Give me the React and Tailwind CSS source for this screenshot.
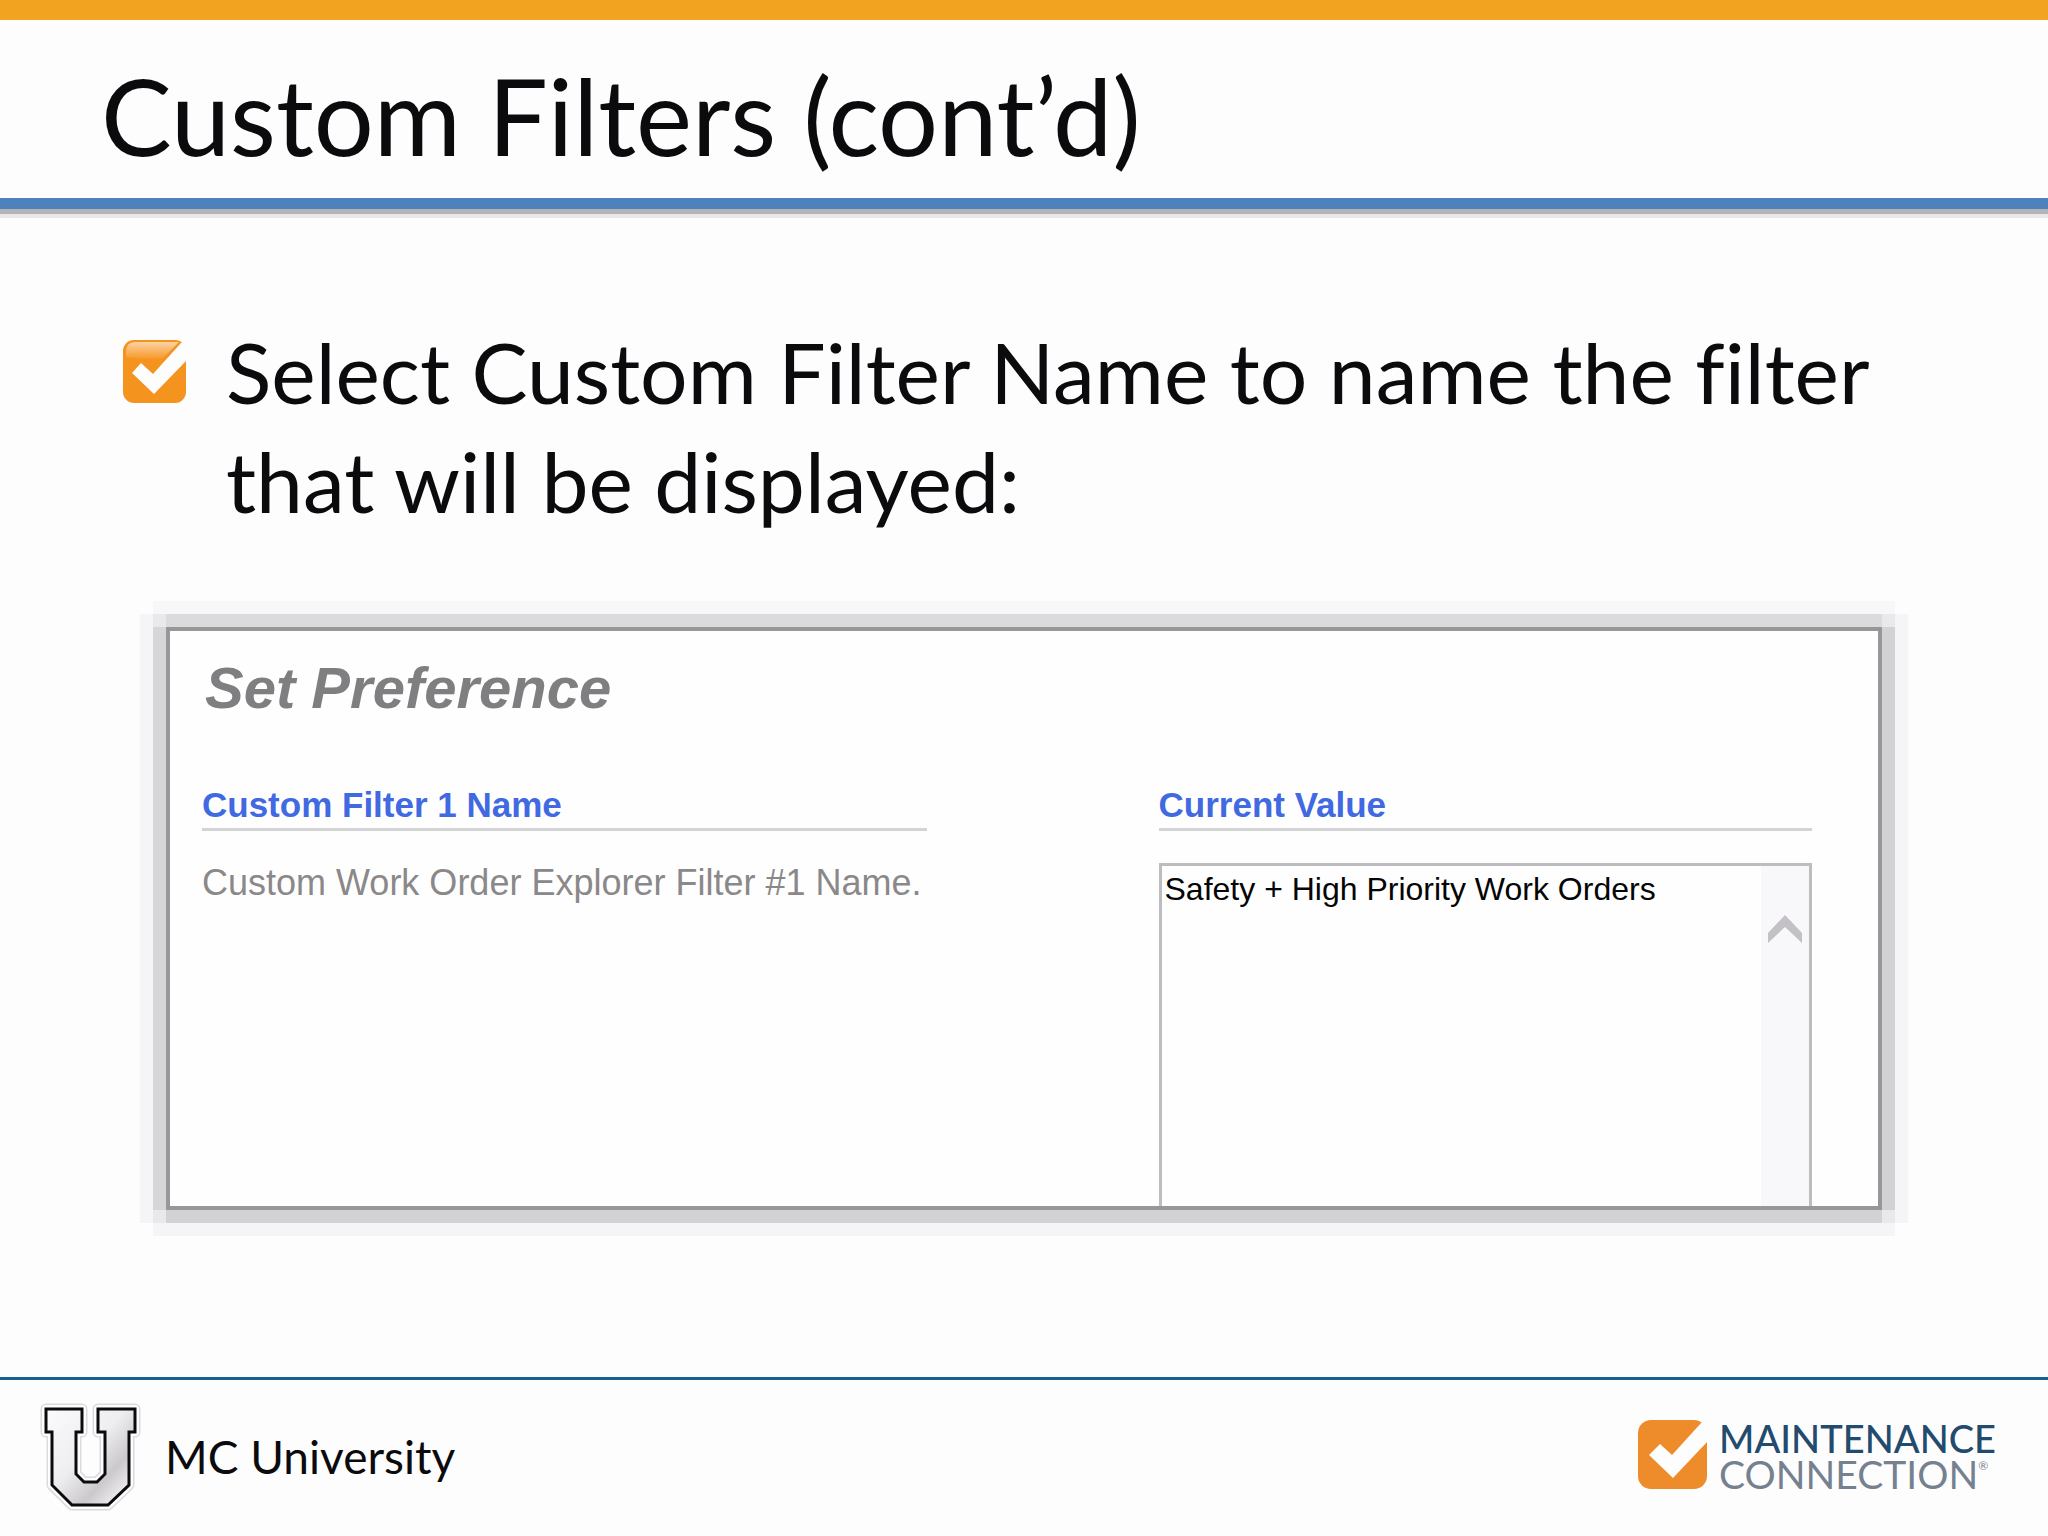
function BulletCheck() {
  return (
    <svg viewBox="0 0 63 63" className="h-[63px] w-[63px]" aria-hidden="true">
      <defs>
        <linearGradient id="gloss" x1="0" y1="0" x2="0" y2="1">
          <stop offset="0" stopColor="#fcd3a2" />
          <stop offset="1" stopColor="#f7992a" />
        </linearGradient>
      </defs>
      <rect width="63" height="63" rx="11" fill="#f5931f" />
      <path d="M12 2H56L40 18Q22 20 3 17V12Q3 2 12 2Z" fill="url(#gloss)" />
      <path d="M9 33L18 23L30 34L58 3L64 -1V20L31 54Z" fill="#fefdfe" />
    </svg>
  );
}

function BrandCheck() {
  return (
    <svg viewBox="0 0 69 69" className="h-[69px] w-[69px]" aria-hidden="true">
      <rect width="69" height="69" rx="13" fill="#ee8c2b" />
      <path d="M11 35L22 24L34 35L64 2L70 -1V21L35 58Z" fill="#fefdfe" />
    </svg>
  );
}

function UniversityMark() {
  const shape =
    "M6 6H42V29H36V71L44 79H57L65 71V29H58V6H95V29H89V82L68 102H32L12 82V29H6Z";
  return (
    <svg viewBox="0 0 101 108" className="h-[108px] w-[101px]" aria-hidden="true">
      <defs>
        <linearGradient id="silver" x1="0" y1="0" x2="1" y2="1">
          <stop offset="0" stopColor="#fbfafc" />
          <stop offset="0.45" stopColor="#eeedef" />
          <stop offset="0.7" stopColor="#cbc9cc" />
          <stop offset="0.9" stopColor="#f4f3f5" />
        </linearGradient>
      </defs>
      <path d={shape} fill="none" stroke="#dddadf" strokeWidth="11" strokeLinejoin="round" />
      <path d={shape} fill="none" stroke="#fefdfe" strokeWidth="8" strokeLinejoin="round" />
      <path d={shape} fill="url(#silver)" stroke="#0b0a0c" strokeWidth="3" />
    </svg>
  );
}

function ColumnHeading({ children, ...rest }) {
  return (
    <div className="border-b-[3px] border-[#d4d3d6] pb-[3px] text-[35px] leading-10 font-bold text-[#4169e1]">
      <span {...rest}>{children}</span>
    </div>
  );
}

export default function App() {
  return (
    <div className="flex min-h-screen flex-col bg-[#fefdfe] font-['Lato',sans-serif] text-[#0b0a0d] [font-variant-ligatures:none]">
      <header className="border-t-[20px] border-[#f2a31f]">
        <h1 className="h-[178px] pl-[101px] pt-[35px] text-[106px] leading-[120px]">
          Custom Filters (cont’d)
        </h1>
        <div className="h-[11px] bg-[#4e81bd]" />
        <div className="h-[5px] bg-[#b3b4b6]" />
        <div className="h-1 bg-[#ebe8ed]" />
      </header>

      <main className="flex-1">
        <ul className="pl-[123px] pt-[99px]">
          <li className="flex gap-10">
            <div className="shrink-0 pt-[23px]">
              <BulletCheck />
            </div>
            <p className="text-[84px] leading-[109px]">
              Select Custom Filter Name to name the filter
              <br />
              that will be displayed:
            </p>
          </li>
        </ul>

        <section className="mx-[170px] mt-24 h-[575px] overflow-hidden bg-[#fefefe] pr-[66px] pl-8 font-['Liberation_Sans',Arial,sans-serif] shadow-[0_0_0_4px_#979698,13px_0_0_4px_#d2d1d4,-13px_0_0_4px_#d6d5d8,0_13px_0_4px_#d2d1d4,0_-13px_0_4px_#dbdadd,0_0_0_17px_#e9e8eb,13px_0_0_17px_#f5f4f7,-13px_0_0_17px_#f5f4f7,0_13px_0_17px_#f5f4f7,0_-13px_0_17px_#f7f6f9]">
          <h2 className="pt-[23px] pl-[3px] text-[58px] leading-[68px] font-bold text-[#7f7e80] italic">
            Set Preference
          </h2>
          <div className="mt-[63px] grid grid-cols-[724fr_653fr] gap-[232px]">
            <div>
              <ColumnHeading>Custom Filter 1 Name</ColumnHeading>
              <p className="mt-8 text-[36px] leading-10 whitespace-nowrap text-[#8b8889]">
                Custom Work Order Explorer Filter #1 Name.
              </p>
            </div>
            <div>
              <ColumnHeading id="current-value">Current Value</ColumnHeading>
              <div className="mt-8 flex h-[360px] border-[3px] border-[#bdbcbe]">
                <textarea
                  aria-labelledby="current-value"
                  defaultValue="Safety + High Priority Work Orders"
                  className="min-w-0 flex-1 resize-none overflow-hidden px-[3px] pt-[3px] text-[32px] leading-10 text-[#050505] outline-none"
                />
                <div className="w-12 bg-[#f8f7fa] pt-[49px]">
                  <button
                    type="button"
                    aria-label="Scroll up"
                    className="flex w-full justify-center text-[#c3c1c5]"
                  >
                    <svg viewBox="0 0 34 28" className="h-7 w-[34px]" fill="currentColor" aria-hidden="true">
                      <path d="M0 28V18L17 0L34 18V28L17 12Z" />
                    </svg>
                  </button>
                </div>
              </div>
            </div>
          </div>
        </section>
      </main>

      <footer className="flex h-[159px] items-start justify-between border-t-[3px] border-[#17608f] pr-[52px] pl-10">
        <div className="flex items-center pt-[23px]">
          <UniversityMark />
          <span className="pl-6 text-[46px] leading-[56px]">MC University</span>
        </div>
        <div className="flex items-start gap-3 pt-10">
          <BrandCheck />
          <div className="leading-9">
            <div className="text-[38px] font-medium text-[#234b6e]">MAINTENANCE</div>
            <div className="flex text-[39px] text-[#75818f]">
              CONNECTION<span className="text-[12px] leading-5">®</span>
            </div>
          </div>
        </div>
      </footer>
    </div>
  );
}
